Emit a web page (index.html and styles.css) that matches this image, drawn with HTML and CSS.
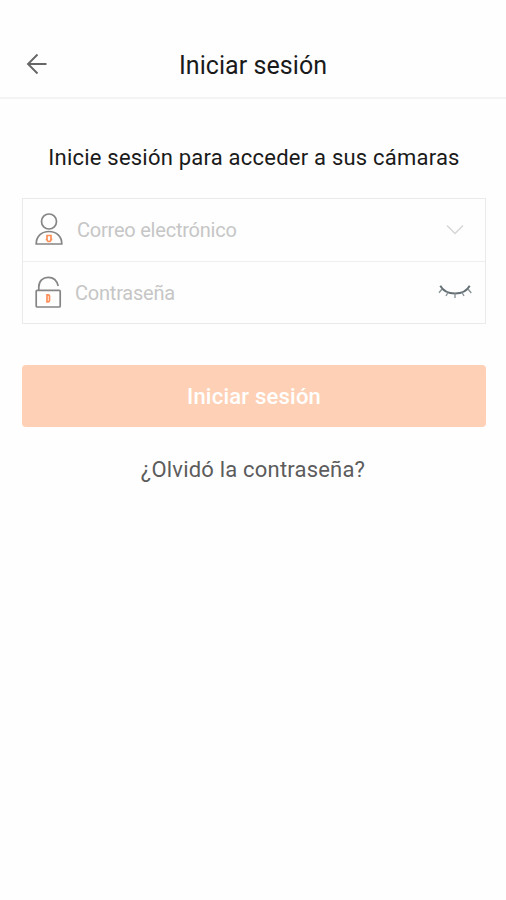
FILE: index.html
```html
<!DOCTYPE html>
<html lang="es">
  <head>
    <meta charset="utf-8">
    <title>Iniciar sesión</title>
    <link rel="stylesheet" href="styles.css">
  </head>
  <body>
    <header class="topbar">
      <a class="back" href="#" aria-label="Atrás">
        <svg width="22" height="22" viewBox="0 0 22 22">
          <path d="M11.5 1.5L2 11l9.5 9.5M2 11h18.5"/>
        </svg>
      </a>
      <h1 class="title">Iniciar sesión</h1>
    </header>
    <main>
      <p class="intro">Inicie sesión para acceder a sus cámaras</p>
      <form>
        <div class="fields">
          <div class="field">
            <svg class="icon" width="28" height="34" viewBox="0 0 28 34">
              <circle cx="14" cy="8.5" r="7.5"/>
              <path d="M1.2 31C1.2 23.5 6.5 18.5 14 18.5S26.8 23.5 26.8 31z"/>
              <path class="accent" d="M12 22.5h4v4.5l-1 1.500h-2l-1-1.500zM10.700 26.500h1.300M16 26.500h1.300"/>
            </svg>
            <input class="email" type="text" placeholder="Correo electrónico">
            <svg class="chevron" width="20" height="12" viewBox="0 0 20 12">
              <path d="M2 1.500l8 8 8-8"/>
            </svg>
          </div>
          <div class="field">
            <svg class="icon" width="28" height="35" viewBox="0 0 28 35">
              <rect x="1.2" y="15.300" width="24" height="16.700" rx="1"/>
              <path d="M3.800 15v-3C3.800 6 8 2.300 13.200 2.300c5 0 8.800 3.300 10 8.700"/>
              <path class="accent" d="M12 19.800h1.200q1.300 0 1.300 1.300v4.400q0 1.300-1.300 1.300H12z"/>
            </svg>
            <input class="password" type="password" placeholder="Contraseña">
            <svg class="eye" width="34" height="17" viewBox="0 0 34 17">
              <path d="M2.300 1.800C5 7 10 9.500 17 9.500S29 7 31.700 1.800"/>
              <path class="lash" d="M4 5L1 8.800M10 8.500l-2 3.500M17 9.500v4.500M24 8.500l2 3.500M30 5l3.300 4"/>
            </svg>
          </div>
        </div>
        <button class="submit" type="button">Iniciar sesión</button>
      </form>
      <a class="forgot" href="#">¿Olvidó la contraseña?</a>
    </main>
  </body>
</html>
```

FILE: styles.css
```css
* {
  box-sizing: border-box;
}
body {
  margin: 0;
  background: #fefefe;
  font-family: Roboto, "Liberation Sans", sans-serif;
  color: #1a1a1a;
}
svg {
  display: block;
  flex: none;
  fill: none;
}
.topbar {
  display: grid;
  grid-template-columns: 60px 1fr 60px;
  align-items: center;
  height: 99px;
  padding-top: 33px;
  border-bottom: 2px solid #f3f3f3;
}
.back {
  padding-left: 26px;
  padding-bottom: 3px;
}
.back svg {
  stroke: #666;
  stroke-width: 1.9;
}
.title {
  margin: 0;
  font-size: 25px;
  font-weight: 400;
  letter-spacing: 0.06px;
  text-align: center;
}
main {
  padding: 0 20px 0 22px;
  text-align: center;
}
.intro {
  margin: 0;
  padding-top: 45px;
  font-size: 22px;
  line-height: 28px;
  letter-spacing: 0.22px;
}
.fields {
  margin-top: 26px;
  border: 1px solid #eaeaea;
}
.field {
  display: flex;
  align-items: center;
  height: 62px;
  padding: 0 13px 0 12px;
}
.field + .field {
  border-top: 1px solid #eee;
}
.icon {
  stroke: #858585;
  stroke-width: 1.7;
}
.accent {
  stroke: #ff8f58;
}
input {
  flex: 1;
  min-width: 0;
  padding: 0;
  border: none;
  outline: none;
  background: none;
  font-family: inherit;
  font-size: 20px;
  letter-spacing: -0.22px;
}
input::placeholder {
  color: #c6c6c6;
}
.email {
  margin-left: 14px;
}
.password {
  margin-left: 12px;
}
.chevron {
  margin-right: 7px;
  stroke: #d6d6d6;
  stroke-width: 1.5;
}
.eye {
  stroke: #657075;
  stroke-width: 1.9;
}
.lash {
  stroke: #8b9498;
  stroke-width: 1.4;
}
.submit {
  display: block;
  width: 100%;
  height: 62px;
  margin-top: 41px;
  padding: 0;
  border: none;
  border-radius: 4px;
  background: #fed1b7;
  color: #fff;
  font-family: inherit;
  font-size: 22px;
  font-weight: 500;
  letter-spacing: 0.22px;
}
.forgot {
  display: block;
  margin-top: 29px;
  padding-right: 2px;
  color: #5c5c5c;
  font-size: 22px;
  line-height: 28px;
  letter-spacing: 0.2px;
  text-decoration: none;
}
```
